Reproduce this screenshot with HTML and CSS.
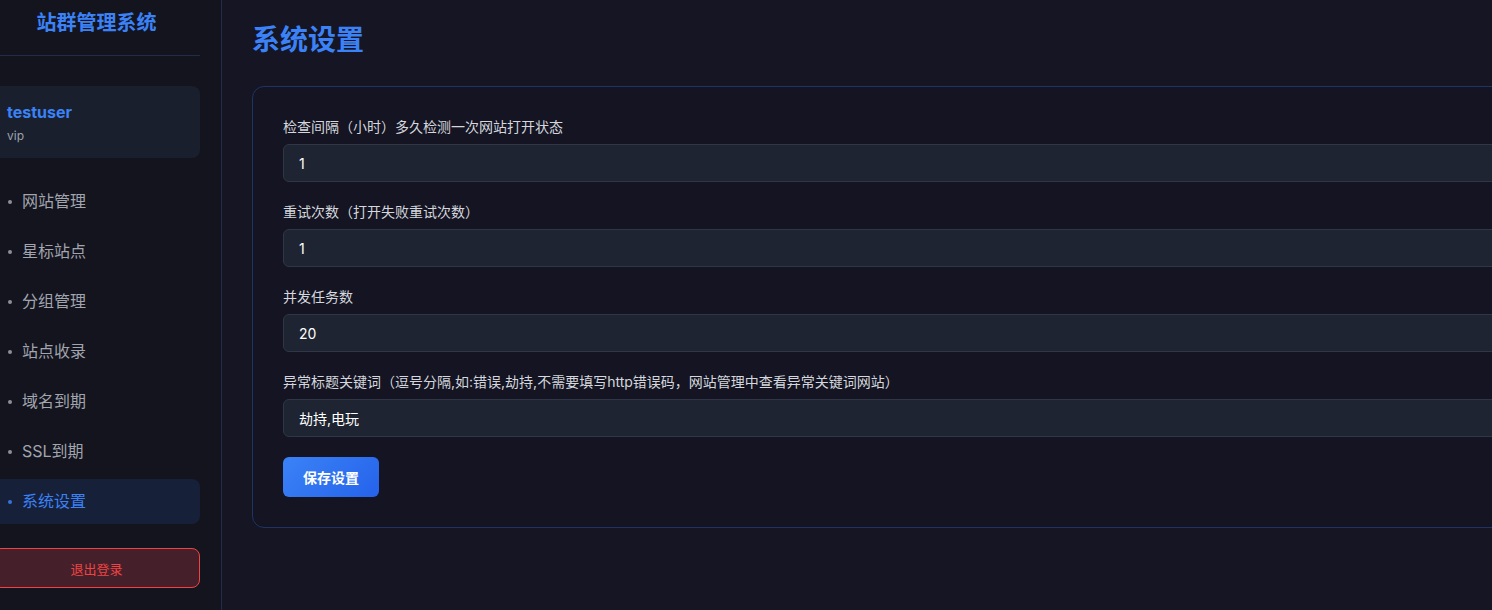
FILE: index.html
```html
<!DOCTYPE html>
<html lang="zh-CN">
<head>
<meta charset="utf-8">
<title>系统设置 - 站群管理系统</title>
<link rel="stylesheet" href="styles.css">
</head>
<body>
<div class="layout">
  <aside class="sidebar">
    <div class="brand">站群管理系统</div>
    <div class="user-card">
      <div class="user-name">testuser</div>
      <div class="user-role">vip</div>
    </div>
    <nav class="nav">
      <a class="nav-item">网站管理</a>
      <a class="nav-item">星标站点</a>
      <a class="nav-item">分组管理</a>
      <a class="nav-item">站点收录</a>
      <a class="nav-item">域名到期</a>
      <a class="nav-item">SSL到期</a>
      <a class="nav-item active">系统设置</a>
    </nav>
    <button class="logout">退出登录</button>
  </aside>
  <main class="main">
    <h1 class="page-title">系统设置</h1>
    <section class="card">
      <div class="field">
        <label class="label">检查间隔（小时）多久检测一次网站打开状态</label>
        <input class="input" type="text" value="1">
      </div>
      <div class="field">
        <label class="label">重试次数（打开失败重试次数）</label>
        <input class="input" type="text" value="1">
      </div>
      <div class="field">
        <label class="label">并发任务数</label>
        <input class="input" type="text" value="20">
      </div>
      <div class="field">
        <label class="label">异常标题关键词（逗号分隔,如:错误,劫持,不需要填写http错误码，网站管理中查看异常关键词网站）</label>
        <input class="input" type="text" value="劫持,电玩">
      </div>
      <button class="save">保存设置</button>
    </section>
  </main>
</div>
</body>
</html>
```

FILE: styles.css
```css
* { box-sizing: border-box; }
html, body {
  margin: 0;
  padding: 0;
  height: 100%;
  overflow: hidden;
  background: #151524;
}
body {
  font-family: Inter, "Noto Sans", "Noto Sans CJK SC", sans-serif;
  color: #d1d5db;
}
.layout {
  display: flex;
  width: 1800px;
  min-height: 610px;
  margin-left: -27px;
}
.sidebar {
  flex: 0 0 249px;
  width: 249px;
  min-height: 610px;
  padding: 0 21px 0 20px;
  background: #14141f;
  border-right: 1px solid #232a4a;
  display: flex;
  flex-direction: column;
}
.brand {
  padding: 9px 0 18px;
  font-size: 20px;
  line-height: 28px;
  font-weight: 700;
  color: #3b82f6;
  text-align: center;
  border-bottom: 1px solid #232b4b;
}
.user-card {
  margin-top: 30px;
  padding: 15px 15px 14px 14px;
  background: #1a1f2d;
  border-radius: 8px;
}
.user-name {
  font-size: 16px;
  line-height: 22px;
  font-weight: 700;
  color: #3b82f6;
}
.user-role {
  margin-top: 4px;
  font-size: 12px;
  line-height: 17px;
  color: #9ca3af;
}
.nav {
  margin-top: 21px;
  display: flex;
  flex-direction: column;
  gap: 5px;
}
.nav-item {
  display: flex;
  align-items: center;
  padding: 12px 15px;
  font-size: 16px;
  line-height: 21px;
  color: #a1a5ae;
  border-radius: 8px;
  cursor: pointer;
}
.nav-item::before {
  content: "";
  width: 4px;
  height: 4px;
  border-radius: 50%;
  background: currentColor;
  margin-right: 10px;
  opacity: 0.85;
}
.nav-item.active {
  background: #172039;
  color: #3b82f6;
}
.logout {
  margin-top: 24px;
  height: 40px;
  background: #45202a;
  border: 1px solid #ef4444;
  border-radius: 8px;
  color: #ef4444;
  font-family: inherit;
  font-size: 13px;
  cursor: pointer;
}
.main {
  flex: 1;
  padding: 23px 30px 30px;
  background: #151524;
}
.page-title {
  margin: 0 0 29px;
  font-size: 28px;
  line-height: 34px;
  font-weight: 700;
  color: #3b82f6;
}
.card {
  padding: 30px;
  border: 1px solid #1f3465;
  border-radius: 12px;
  background: #141422;
}
.field {
  margin-bottom: 20px;
}
.label {
  display: block;
  margin-bottom: 8px;
  font-size: 14px;
  line-height: 19px;
  color: #d4d7dd;
}
.input {
  display: block;
  width: 100%;
  height: 38px;
  padding: 0 15px;
  background: #1e2431;
  border: 1px solid #2f3746;
  border-radius: 6px;
  color: #ffffff;
  font-family: inherit;
  font-size: 14px;
  outline: none;
}
.save {
  height: 40px;
  padding: 0 20px;
  border: none;
  border-radius: 6px;
  background: linear-gradient(135deg, #3b82f6, #2563eb);
  color: #ffffff;
  font-family: inherit;
  font-size: 14px;
  font-weight: 600;
  cursor: pointer;
}
```
